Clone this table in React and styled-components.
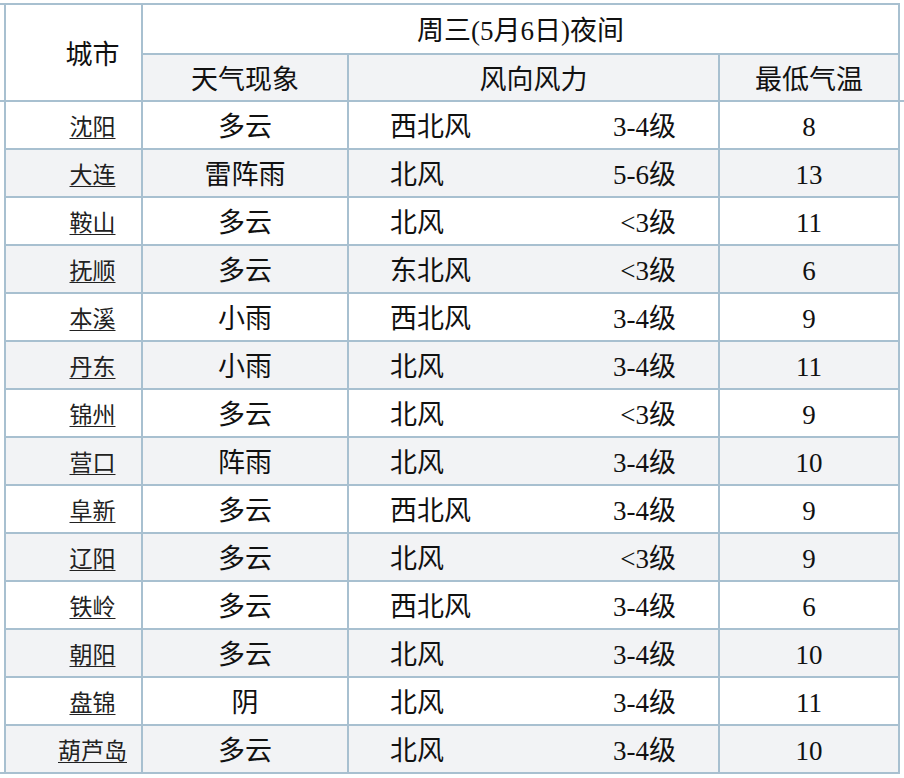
import React from "react";
import styled, { createGlobalStyle } from "styled-components";

const Global = createGlobalStyle`
  html, body { margin: 0; padding: 0; background: #ffffff; }
  body {
    font-family: "Liberation Serif", "Noto Sans CJK SC", serif;
    color: #111;
  }
`;

const LINE = "#a8c0d0";

const Page = styled.div`
  width: 904px;
  height: 778px;
  overflow: hidden;
  padding: 3px 0 0 4px;
  box-sizing: border-box;
  position: relative;
`;

const Grid = styled.div`
  display: grid;
  grid-template-columns: 137px 206px 371px 180px;
  grid-template-rows: 50px 47px repeat(14, 48px);
  border-top: 2px solid ${LINE};
  border-left: 2px solid ${LINE};
  width: max-content;
`;

const Cell = styled.div`
  box-sizing: border-box;
  border-right: 2px solid ${LINE};
  border-bottom: 2px solid ${LINE};
  background: ${(p) => (p.$shade ? "#f2f3f5" : "#ffffff")};
  display: flex;
  align-items: center;
  justify-content: center;
  padding-top: 5px;
  font-size: 27px;
  line-height: 1;
  white-space: nowrap;
`;

const CityHead = styled(Cell)`
  grid-row: span 2;
  padding-left: 38px;
`;

const DayHead = styled(Cell)`
  grid-column: span 3;
`;

const CityCell = styled(Cell)`
  padding-left: 38px;
  font-size: 23px;
`;

const CityLink = styled.span`
  text-decoration: underline;
  text-underline-offset: 3px;
  text-decoration-thickness: 1px;
  color: #222;
`;

const WindCell = styled(Cell)`
  justify-content: space-between;
  padding-left: 41px;
  padding-right: 42px;
`;

const Edge = styled.div`
  position: absolute;
  height: 2px;
  background: ${LINE};
  left: ${(p) => p.$left}px;
  top: ${(p) => p.$top}px;
  width: ${(p) => p.$width}px;
`;

const rows = [
  ["沈阳", "多云", "西北风", "3-4级", "8"],
  ["大连", "雷阵雨", "北风", "5-6级", "13"],
  ["鞍山", "多云", "北风", "<3级", "11"],
  ["抚顺", "多云", "东北风", "<3级", "6"],
  ["本溪", "小雨", "西北风", "3-4级", "9"],
  ["丹东", "小雨", "北风", "3-4级", "11"],
  ["锦州", "多云", "北风", "<3级", "9"],
  ["营口", "阵雨", "北风", "3-4级", "10"],
  ["阜新", "多云", "西北风", "3-4级", "9"],
  ["辽阳", "多云", "北风", "<3级", "9"],
  ["铁岭", "多云", "西北风", "3-4级", "6"],
  ["朝阳", "多云", "北风", "3-4级", "10"],
  ["盘锦", "阴", "北风", "3-4级", "11"],
  ["葫芦岛", "多云", "北风", "3-4级", "10"],
];

export default function App() {
  return (
    <>
      <Global />
      <Page>
        <Edge $left={0} $top={3} $width={6} />
        <Edge $left={0} $top={100} $width={6} />
        <Edge $left={0} $top={772} $width={6} />
        <Edge $left={898} $top={100} $width={6} />
        <Grid>
          <CityHead>城市</CityHead>
          <DayHead>周三(5月6日)夜间</DayHead>
          <Cell $shade>天气现象</Cell>
          <Cell $shade>风向风力</Cell>
          <Cell $shade>最低气温</Cell>
          {rows.map((r, i) => {
            const shade = i % 2 === 1;
            return (
              <React.Fragment key={r[0]}>
                <CityCell $shade={shade}>
                  <CityLink>{r[0]}</CityLink>
                </CityCell>
                <Cell $shade={shade}>{r[1]}</Cell>
                <WindCell $shade={shade}>
                  <span>{r[2]}</span>
                  <span>{r[3]}</span>
                </WindCell>
                <Cell $shade={shade}>{r[4]}</Cell>
              </React.Fragment>
            );
          })}
        </Grid>
      </Page>
    </>
  );
}
